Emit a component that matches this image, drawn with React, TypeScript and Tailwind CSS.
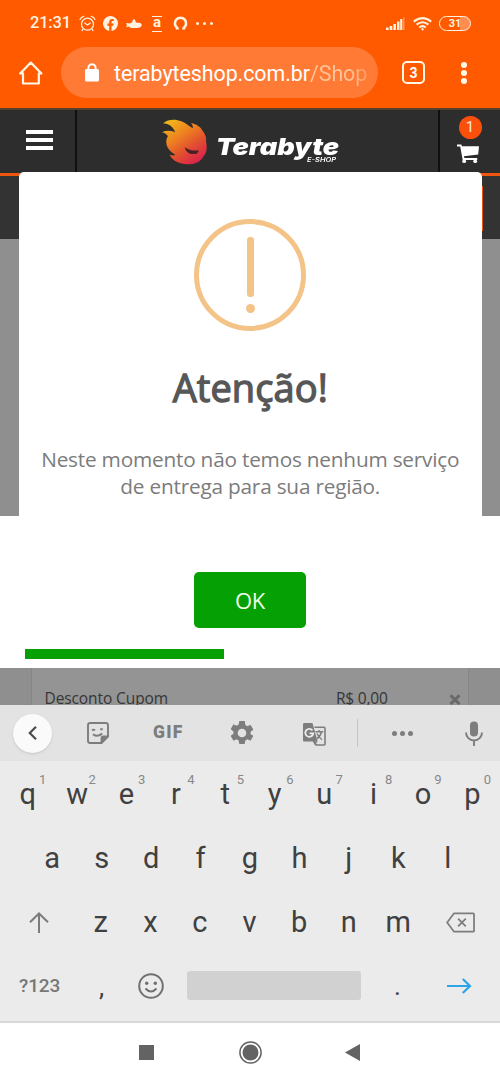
import React from 'react';

const topRow = ['q', 'w', 'e', 'r', 't', 'y', 'u', 'i', 'o', 'p'];
const middleRow = ['a', 's', 'd', 'f', 'g', 'h', 'j', 'k', 'l'];
const bottomRow = ['z', 'x', 'c', 'v', 'b', 'n', 'm'];

const StatusBar: React.FC = () => (
  <div className="flex h-[47px] items-center pl-[30px] pr-[29px] text-[#fff3df]">
    <span className="w-[42px] text-[16.5px] font-medium leading-none tracking-[-0.2px]">21:31</span>
    <svg className="ml-[7px] h-[17px] w-[17px]" viewBox="0 0 17 17" fill="none" stroke="currentColor" strokeWidth="1.2" strokeLinecap="round">
      <circle cx="8.5" cy="9.2" r="6" />
      <path d="M1 4.5Q2 1.8 4.8 1.3M16 4.5Q15 1.8 12.2 1.3M5.8 8l2.7 2.1L11.3 8M4 14l-1 1.6M13 14l1 1.6" />
    </svg>
    <svg className="ml-[7px] h-[15px] w-[15px]" viewBox="0 0 15 15" fill="currentColor">
      <path d="M15 7.5A7.5 7.5 0 1 0 6.2 14.9V9.7H4.4V7.5h1.8V6c0-2 1.1-3 2.9-3 .8 0 1.6.1 1.6.1V5h-.9c-1 0-1.3.6-1.3 1.2v1.3h2.1l-.4 2.2H8.5v5.2A7.5 7.5 0 0 0 15 7.5z" />
    </svg>
    <svg className="ml-[8px] h-[9px] w-[16px]" viewBox="0 0 16 9" fill="currentColor">
      <path d="M0 4l3.5.6L6 3.4 7 .5h2l.9 2.9 4.6.7L16 6l-1.5 2.2L11 9H5L2.6 7.4 0 8.3 1 6z" />
    </svg>
    <div className="ml-[10px] flex h-[16px] w-[10px] items-center justify-center border-y-[1.5px] border-current text-[15px] font-bold leading-none">
      <span className="-mt-[2px]">a</span>
    </div>
    <svg className="ml-[11px] h-[15px] w-[15px]" viewBox="0 0 15 15" fill="none" stroke="currentColor" strokeWidth="2.6">
      <path d="M4.6 12.1A5.6 5.6 0 1 1 10.4 12.1" />
      <path d="M2.8 12.4h3M9.2 12.4h3" strokeWidth="2" />
    </svg>
    <div className="ml-[8px] flex gap-[4px]">
      <span className="h-[3px] w-[3px] rounded-full bg-current" />
      <span className="h-[3px] w-[3px] rounded-full bg-current" />
      <span className="h-[3px] w-[3px] rounded-full bg-current" />
    </div>
    <div className="ml-auto flex items-center">
      <svg className="h-[13px] w-[19px]" viewBox="0 0 19 13" fill="currentColor">
        <path d="M0 10.5h2.6V13H0zM3.7 9h2.6v4H3.7zM7.4 7h2.5v6H7.4zM11 4.5h2.5V13H11zM14.2 2h2.1v11h-2.1z" />
        <path d="M17 .5h1.5V13H17z" opacity=".4" />
      </svg>
      <svg className="ml-[8px] h-[14px] w-[19px]" viewBox="0 0 19 14" fill="none" stroke="currentColor" strokeWidth="2">
        <path d="M.8 4.6Q9.5-2.4 18.2 4.6M3.6 7.6Q9.5 2.8 15.4 7.6M6.3 10.4Q9.5 7.8 12.7 10.4" />
        <circle cx="9.5" cy="12.3" r=".8" fill="currentColor" strokeWidth="1" />
      </svg>
      <div className="ml-[7px] flex h-[15px] w-[32px] items-center justify-center rounded-full border-[1.5px] border-current bg-[linear-gradient(90deg,#ff5a00_66%,#ff8d50_66%)] text-[11px] font-bold leading-none">
        31
      </div>
    </div>
  </div>
);

const AddressBar: React.FC = () => (
  <div className="flex items-center pl-[19px] text-white">
    <svg className="h-[24px] w-[24px]" viewBox="0 0 24 24" fill="none" stroke="#fff8e8" strokeWidth="2.2" strokeLinejoin="round" strokeLinecap="round">
      <path d="M1.2 12.4L11.8 1.6l10.6 10.8H19.8V22.5H4V12.4z" />
    </svg>
    <div className="ml-[18px] flex h-[51px] w-[317px] items-center rounded-full bg-[#ff7b35] pl-[24px]">
      <svg className="h-[19px] w-[14px]" viewBox="0 0 14 19" fill="none">
        <rect y="6" width="14" height="12.5" rx="1.5" fill="white" />
        <path d="M3.4 7V4.8a3.6 3.6 0 0 1 7.2 0V7" stroke="white" strokeWidth="1.9" />
      </svg>
      <span className="ml-[15px] mt-[2px] whitespace-nowrap text-[21.4px] leading-none tracking-[-0.05px]">
        terabyteshop.com.br
        <span className="bg-[linear-gradient(90deg,#ffc49c_70%,#ff9a62)] bg-clip-text text-transparent">/Shop</span>
      </span>
    </div>
    <div className="ml-[24px] flex h-[23px] w-[23px] items-center justify-center rounded-[5px] border-2 border-[#fff8e8] text-[14px] font-bold leading-none">
      3
    </div>
    <div className="ml-[36px] flex flex-col gap-[2px]">
      <span className="h-[6px] w-[6px] rounded-full bg-[#fff8e8]" />
      <span className="h-[6px] w-[6px] rounded-full bg-[#fff8e8]" />
      <span className="h-[6px] w-[6px] rounded-full bg-[#fff8e8]" />
    </div>
  </div>
);

const FlameLogo: React.FC = () => (
  <svg className="h-[46px] w-[47px]" viewBox="484 41 140 139">
    <defs>
      <linearGradient id="flame" x1="0.1" y1="0" x2="0.8" y2="1">
        <stop offset="0" stopColor="#f0bd1b" />
        <stop offset="0.38" stopColor="#ee8220" />
        <stop offset="0.66" stopColor="#e2502f" />
        <stop offset="1" stopColor="#d81e50" />
      </linearGradient>
    </defs>
    <path
      d="M489 54C505 40 528 41 545 48C560 54 570 65 579 69C580 62 577 56 573 53C592 57 603 65 608 76C617 87 621 97 619 108C623 127 622 144 611 154C603 170 586 178 563 178C538 177 518 168 509 149C516 152 522 152 527 150C509 139 500 127 499 113C498 105 501 97 504 93C500 87 494 83 486 81C499 75 512 76 526 81C519 64 507 55 489 54Z"
      fill="url(#flame)"
    />
    <path d="M555 126C567 135 580 137 598 136L592 145C574 151 558 143 555 126Z" fill="#4a2027" />
  </svg>
);

const ShopHeader: React.FC = () => (
  <div>
    <div className="flex h-[68px] border-b-[3px] border-t-2 border-b-[#ef560f] border-t-[#58402f] bg-[#2d2d2d]">
      <div className="flex w-[77px] flex-col gap-[4px] border-r-2 border-[#101010] pl-[26px] pt-[20px]">
        <span className="h-[4px] w-[27px] bg-white" />
        <span className="h-[4px] w-[27px] bg-white" />
        <span className="h-[4px] w-[27px] bg-white" />
      </div>
      <div className="flex flex-1 pl-[84px] pt-[9px]">
        <FlameLogo />
        <div className="ml-[8px] flex w-[124px] flex-col pt-[17px] text-white">
          <span className="origin-left scale-x-[1.18] font-['Inter'] text-[23px] font-black italic leading-[22px]">Terabyte</span>
          <span className="-mt-px ml-[91px] origin-left scale-x-125 whitespace-nowrap font-['Inter'] text-[6px] font-semibold italic leading-[5px]">E-SHOP</span>
        </div>
      </div>
      <div className="flex w-[62px] flex-col items-center border-l-2 border-[#101010] pt-[6px]">
        <div className="flex h-[23px] w-[23px] items-center justify-center rounded-full bg-[#fb4f0c] text-[15px] leading-none text-[#ffe6d8]">1</div>
        <svg className="-ml-[4px] mt-[5px] h-[20px] w-[22px]" viewBox="0 0 22 20" fill="white">
          <path d="M0 .5h4.3L5 2.2h17l-.8 8.4-14.3 1.7.5 1.6h12.8v2.2H5.7L3.2 2.6H0z" />
          <circle cx="7.2" cy="17.2" r="1.9" />
          <circle cx="18.2" cy="17.2" r="1.9" />
        </svg>
      </div>
    </div>
    <div className="flex h-[63px] justify-end bg-[#333333] pr-[17px] pt-[10px]">
      <div className="h-[45px] w-[8px] bg-[#ef560f]" />
    </div>
  </div>
);

const AlertCard: React.FC = () => (
  <div className="absolute left-[19px] right-[18.5px] top-[64px] flex h-[344px] flex-col items-center rounded-t-[5px] bg-white pt-[47px] font-['Open_Sans',sans-serif]">
    <div className="flex h-[112px] w-[112px] flex-col items-center rounded-full border-[5px] border-[#f3c388] pt-[13px]">
      <span className="h-[60px] w-[7px] rounded-[3px] bg-[#f3c388]" />
      <span className="mt-[7px] h-[9px] w-[9px] rounded-full bg-[#f3c388]" />
    </div>
    <h2 className="mt-[30px] text-[38px] leading-[52px] tracking-[0.1px] text-[#575757] [-webkit-text-stroke:1.3px_#575757]">Atenção!</h2>
    <p className="mt-[33px] whitespace-nowrap text-center text-[20.8px] leading-[27px] tracking-[-0.22px] text-[#7c7c7c]">
      Neste momento não temos nenhum serviço
      <br />
      de entrega para sua região.
    </p>
  </div>
);

const ShopPage: React.FC = () => (
  <div className="relative h-[597px] overflow-hidden bg-[#8f8f8f]">
    <ShopHeader />
    <div className="h-[276.5px]" />
    <div className="flex h-[152.5px] flex-col items-center bg-white pt-[56px] font-['Open_Sans',sans-serif]">
      <button className="h-[56px] w-[112px] rounded-[5px] bg-[#04a004] text-[22px] leading-none tracking-[-0.4px] text-[#f1ffe9]">OK</button>
      <div className="mt-[21px] flex w-full pl-[25px]">
        <div className="h-[10px] w-[199px] bg-[#04a004]" />
      </div>
    </div>
    <div className="mx-[31px] flex h-[38px] border-x border-[#868686] bg-[#949494] pl-[12.5px] pt-[19px] font-['Open_Sans',sans-serif] text-[15.5px] leading-[22px] text-[#363636]">
      <span className="w-[291.5px] tracking-[-0.1px]">Desconto Cupom</span>
      <span className="w-[113px] tracking-[-0.2px]">R$ 0,00</span>
      <svg className="mt-[7px] h-[11px] w-[12px]" viewBox="0 0 12 11" stroke="#696969" strokeWidth="3">
        <path d="M1.5 1.2l9 8.8M10.5 1.2l-9 8.8" />
      </svg>
    </div>
    <AlertCard />
  </div>
);

const KeyboardToolbar: React.FC = () => (
  <div className="flex h-[56px] items-center bg-[#e3e3e3] pl-[13px] text-[#7d7d7d]">
    <div className="flex h-[39px] w-[39px] items-center justify-center rounded-full bg-[#fafafa] shadow">
      <svg className="h-[14px] w-[9px]" viewBox="0 0 9 14" fill="none" stroke="#4b4b4b" strokeWidth="2.2">
        <path d="M8 .8L1.8 7 8 13.2" />
      </svg>
    </div>
    <svg className="ml-[35px] h-[22px] w-[22px]" viewBox="0 0 22 22" fill="none" stroke="currentColor" strokeWidth="1.9">
      <path d="M3.3 1h15.4Q21 1 21 3.3v11.2L14.5 21H3.3Q1 21 1 18.7V3.3Q1 1 3.3 1z" />
      <path d="M20.5 14.5h-4q-2 0-2 2v4z" fill="currentColor" />
      <path d="M6 12.2q4.5 3.6 9.2-.8M5.2 8.5q1.4-1.7 2.6 0M13.2 7.2h2.6" strokeWidth="2" />
    </svg>
    <span className="ml-[44px] w-[31px] text-[17.5px] font-black leading-none tracking-[1.3px]">GIF</span>
    <svg className="ml-[46px] h-[24px] w-[24px]" viewBox="2 2 20 20" fill="currentColor">
      <path d="M19.14 12.94c.04-.3.06-.61.06-.94s-.02-.64-.07-.94l2.03-1.58c.18-.14.23-.41.12-.61l-1.92-3.32c-.12-.22-.37-.29-.59-.22l-2.39.96c-.5-.38-1.03-.7-1.62-.94l-.36-2.54A.48.48 0 0 0 13.92 2h-3.84c-.24 0-.43.17-.47.41l-.36 2.54c-.59.24-1.13.57-1.62.94l-2.39-.96c-.22-.08-.47 0-.59.22L2.74 8.47c-.12.21-.08.47.12.61l2.03 1.58c-.05.3-.09.63-.09.94s.02.64.07.94l-2.03 1.58c-.18.14-.23.41-.12.61l1.92 3.32c.12.22.37.29.59.22l2.39-.96c.5.38 1.03.7 1.62.94l.36 2.54c.05.24.24.41.48.41h3.84c.24 0 .44-.17.47-.41l.36-2.54c.59-.24 1.13-.56 1.62-.94l2.39.96c.22.08.47 0 .59-.22l1.92-3.32c.12-.22.07-.47-.12-.61zM12 15.6A3.6 3.6 0 1 1 12 8.4a3.6 3.6 0 0 1 0 7.2z" />
    </svg>
    <svg className="ml-[49px] mt-[2px] h-[23px] w-[23px]" viewBox="0 0 23 23" fill="none" stroke="currentColor">
      <path d="M11.5 4.3H21q1 0 1 1V21q0 1-1 1h-8l-2.5-4" strokeWidth="1.6" />
      <path d="M1.3 0h8.2l5.1 18.5H1.3Q0 18.5 0 17.2V1.3Q0 0 1.3 0z" fill="currentColor" stroke="none" />
      <path d="M10.5 18.5h4.2L11.8 22z" fill="currentColor" stroke="none" />
      <path d="M12.5 8.8h7.8M16.2 7v1.8M18.5 9q-1 4.3-5 7M14 10.5q1.8 4 5 6.3" strokeWidth="1.4" />
      <path d="M9.5 7.4A4 4 0 1 0 10.3 10.4H6.5" stroke="#ececec" strokeWidth="1.8" />
    </svg>
    <div className="ml-[31px] h-[28px] w-px bg-[#c5c5c5]" />
    <div className="ml-[34px] flex gap-[3px]">
      <span className="h-[5px] w-[5px] rounded-full bg-current" />
      <span className="h-[5px] w-[5px] rounded-full bg-current" />
      <span className="h-[5px] w-[5px] rounded-full bg-current" />
    </div>
    <svg className="ml-[52px] h-[25px] w-[18px]" viewBox="0 0 18 25" fill="none" stroke="currentColor" strokeWidth="1.9">
      <rect x="5" y="0.5" width="8" height="15" rx="3.8" fill="currentColor" stroke="none" />
      <path d="M1 11.5a8 8 0 0 0 16 0M9 19.5V25" />
    </svg>
  </div>
);

const Keyboard: React.FC = () => (
  <div className="bg-[#ebebeb] text-[#404040]">
    <KeyboardToolbar />
    <div className="h-[262px] border-b-2 border-[#d8d8d8] text-[29px] leading-none">
      <div className="flex h-[64px] items-center px-[3px] pt-[2px]">
        {topRow.map((letter, i) => (
          <div key={letter} className="relative flex flex-1 justify-center">
            {letter}
            <span className="absolute right-[6px] -top-[7px] text-[13px] leading-none text-[#888888]">{(i + 1) % 10}</span>
          </div>
        ))}
      </div>
      <div className="flex h-[64px] items-center px-[27.5px] pt-[2px]">
        {middleRow.map((letter) => (
          <div key={letter} className="flex flex-1 justify-center">{letter}</div>
        ))}
      </div>
      <div className="flex h-[64px] items-center pr-[25px] pt-[2px]">
        <div className="flex w-[76px] pl-[29px]">
          <svg className="h-[21px] w-[20px]" viewBox="0 0 20 21" fill="none" stroke="#7c7c7c" strokeWidth="2">
            <path d="M1 10.3L10 1.5l9 8.8M10 2v19" />
          </svg>
        </div>
        <div className="flex w-[347px]">
          {bottomRow.map((letter) => (
            <div key={letter} className="flex flex-1 justify-center">{letter}</div>
          ))}
        </div>
        <svg className="ml-auto h-[21px] w-[29px]" viewBox="0 0 30 21" fill="none" stroke="#7c7c7c" strokeWidth="1.8">
          <path d="M8.3 1H28q1 0 1 1v17q0 1-1 1H8.3L1.2 10.5zM12.5 6.5l8 8M20.5 6.5l-8 8" />
        </svg>
      </div>
      <div className="flex h-[64px] items-center pl-[19px] pt-px">
        <span className="w-[80px] text-[19px] font-medium leading-none tracking-[-0.1px] text-[#777777]">?123</span>
        <span className="w-[39px] pt-[3px] text-[26px]">,</span>
        <svg className="h-[26px] w-[26px]" viewBox="0 0 26 26" fill="none" stroke="#707070" strokeWidth="2">
          <circle cx="13" cy="13" r="11.8" />
          <path d="M7.5 15.5Q13 21.5 18.5 15.5" />
          <circle cx="8.7" cy="10.2" r="1.7" fill="#707070" stroke="none" />
          <circle cx="17.3" cy="10.2" r="1.7" fill="#707070" stroke="none" />
        </svg>
        <div className="ml-[23px] h-[29px] w-[174px] rounded-[3px] bg-[#d1d1d1]" />
        <span className="ml-[33px] w-[53px] pt-px text-[26px]">.</span>
        <svg className="h-[16px] w-[25px]" viewBox="0 0 25 16" fill="none" stroke="#2ba4e8" strokeWidth="2.2">
          <path d="M0 8h23M15.8 1L23 8l-7.2 7" />
        </svg>
      </div>
    </div>
  </div>
);

const NavigationBar: React.FC = () => (
  <div className="flex h-[59px] items-center bg-white pl-[139px]">
    <div className="h-[15px] w-[15px] bg-[#636363]" />
    <svg className="ml-[85px] h-[23px] w-[23px]" viewBox="0 0 23 23" fill="none">
      <circle cx="11.5" cy="11.5" r="10.6" stroke="#636363" strokeWidth="1.5" />
      <circle cx="11.5" cy="11.5" r="8" fill="#636363" />
    </svg>
    <svg className="ml-[83px] h-[17px] w-[15px]" viewBox="0 0 15 17" fill="#636363">
      <path d="M0 8.5L15 0v17z" />
    </svg>
  </div>
);

const App: React.FC = () => {
  return (
    <div className="h-[1082px] w-[500px] overflow-hidden bg-white font-['Roboto',sans-serif]">
      <div className="h-[108px] bg-[#ff5a00]">
        <StatusBar />
        <AddressBar />
      </div>
      <ShopPage />
      <Keyboard />
      <NavigationBar />
    </div>
  );
};

export default App;
